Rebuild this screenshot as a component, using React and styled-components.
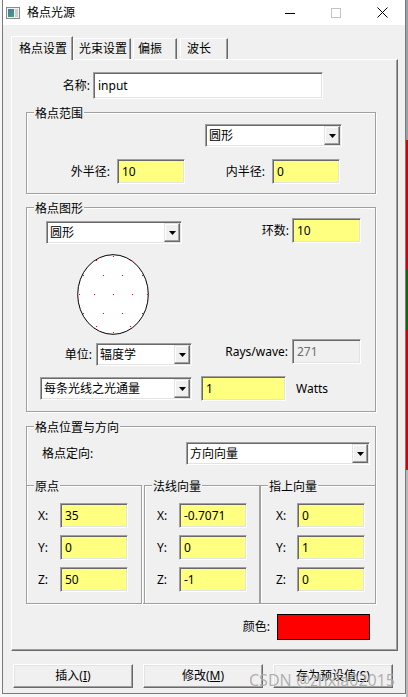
import React from "react";
import styled, { createGlobalStyle } from "styled-components";

const GlobalStyle = createGlobalStyle`
  html, body { margin: 0; padding: 0; }
  body {
    font-family: "Noto Sans", "Noto Sans CJK SC", sans-serif;
    font-size: 12px;
    color: #000;
  }
  * { box-sizing: border-box; }
`;

const Page = styled.div`
  position: relative;
  width: 408px;
  height: 697px;
  overflow: hidden;
  background:
    linear-gradient(
        to bottom,
        #9aa0a8 0 140px,
        #d80000 140px 270px,
        #0b6b0b 270px 330px,
        #d80000 330px 470px,
        #b8b8b8 470px
      )
      right top / 2px 100% no-repeat,
    #f7f7f7;
`;

const Window = styled.div`
  margin-left: 2px;
  width: 404px;
  height: 694px;
  border: 1px solid #7a7a7a;
  border-top: none;
  background: #f0f0f0;
  display: flex;
  flex-direction: column;
`;

const TitleBar = styled.div`
  height: 25px;
  background: #fff;
  display: flex;
  align-items: flex-start;
  flex-shrink: 0;
`;

const AppIcon = styled.svg`
  margin: 7px 0 0 3px;
  flex-shrink: 0;
`;

const TitleText = styled.span`
  margin: 5px 0 0 7px;
  line-height: 16px;
`;

const CaptionButton = styled.div`
  width: 46px;
  height: 25px;
  display: flex;
  align-items: center;
  justify-content: center;
  margin-left: ${(p) => (p.$first ? "auto" : "0")};
`;

const Body = styled.div`
  padding: 11px 7px 0 8px;
  display: flex;
  flex-direction: column;
`;

const TabStrip = styled.div`
  height: 23px;
  display: flex;
  align-items: flex-end;
`;

const Tab = styled.div`
  position: relative;
  z-index: ${(p) => (p.$active ? 2 : 0)};
  width: ${(p) => p.$w}px;
  height: ${(p) => (p.$active ? 24 : 21)}px;
  margin-bottom: ${(p) => (p.$active ? -1 : 0)}px;
  margin-left: ${(p) => p.$ml || 0}px;
  padding-left: ${(p) => p.$pl}px;
  background: #f0f0f0;
  border-top: 1px solid #fff;
  border-left: 1px solid #fff;
  border-right: 1px solid #696969;
  box-shadow: inset -1px 0 0 #a0a0a0;
  display: flex;
  align-items: center;
  line-height: 16px;
  white-space: nowrap;
`;

const Panel = styled.div`
  position: relative;
  z-index: 1;
  width: 387px;
  height: 592px;
  background: #f0f0f0;
  border-top: 1px solid #fff;
  border-left: 1px solid #fff;
  border-right: 1px solid #696969;
  border-bottom: 1px solid #696969;
  box-shadow: inset -1px -1px 0 #a0a0a0;
  display: flex;
  flex-direction: column;
`;

const Row = styled.div`
  display: flex;
  align-items: ${(p) => p.$align || "center"};
  justify-content: ${(p) => p.$justify || "flex-start"};
  margin-top: ${(p) => p.$mt || 0}px;
  padding-left: ${(p) => p.$pl || 0}px;
  padding-right: ${(p) => p.$pr || 0}px;
`;

const Field = styled.div`
  display: flex;
  align-items: center;
  margin-top: ${(p) => p.$mt || 0}px;
  margin-left: ${(p) => p.$ml || 0}px;
`;

const Label = styled.span`
  flex-shrink: 0;
  width: ${(p) => (p.$w ? `${p.$w}px` : "auto")};
  text-align: ${(p) => p.$align || "right"};
  margin-right: ${(p) => p.$gap || 0}px;
  margin-left: ${(p) => p.$ml || 0}px;
  line-height: 16px;
  white-space: nowrap;
`;

const sunken = `
  border: 1px solid;
  border-color: #a0a0a0 #fff #fff #a0a0a0;
  box-shadow: inset 1px 1px 0 #696969, inset -1px -1px 0 #e3e3e3;
`;

const TextBox = styled.div`
  flex-shrink: 0;
  width: ${(p) => p.$w}px;
  height: ${(p) => p.$h || 25}px;
  margin-left: ${(p) => p.$ml || 0}px;
  background: ${(p) =>
    p.$tone === "yellow" ? "#ffff80" : p.$tone === "disabled" ? "#f0f0f0" : "#fff"};
  color: ${(p) => (p.$tone === "disabled" ? "#6d6d6d" : "#000")};
  ${sunken}
  padding: 0 3px 0 4px;
  display: flex;
  align-items: center;
  line-height: 16px;
  white-space: nowrap;
`;

const Combo = styled.div`
  flex-shrink: 0;
  width: ${(p) => p.$w}px;
  height: 23px;
  background: #fff;
  ${sunken}
  display: flex;
  align-items: stretch;
`;

const ComboText = styled.span`
  flex: 1;
  display: flex;
  align-items: center;
  padding-left: 3px;
  line-height: 16px;
  white-space: nowrap;
  overflow: hidden;
`;

const ComboButton = styled.span`
  width: 16px;
  margin: 1px 1px 1px 0;
  background: #f0f0f0;
  border: 1px solid;
  border-color: #e3e3e3 #696969 #696969 #e3e3e3;
  box-shadow: inset -1px -1px 0 #a0a0a0, inset 1px 1px 0 #fff;
  display: flex;
  align-items: center;
  justify-content: center;
`;

const Group = styled.div`
  position: relative;
  width: ${(p) => p.$w}px;
  margin-top: ${(p) => p.$mt || 0}px;
  margin-left: ${(p) => p.$ml || 0}px;
  padding: ${(p) => p.$pt || 0}px 0 ${(p) => p.$pb || 0}px ${(p) => p.$pl || 0}px;
  border: 1px solid #a0a0a0;
  box-shadow: inset 1px 1px 0 #fff, 1px 1px 0 #fff;
  display: flex;
  flex-direction: column;
  flex-shrink: 0;
`;

const GroupTitle = styled.span`
  position: absolute;
  top: -7px;
  left: 7px;
  padding: 0 1px;
  background: #f0f0f0;
  line-height: 16px;
  white-space: nowrap;
`;

const SubRow = styled.div`
  display: flex;
  margin: 20px -1px -1px -1px;
`;

const SubFields = styled.div`
  display: flex;
  flex-direction: column;
  gap: 7px;
`;

const Swatch = styled.div`
  width: 93px;
  height: 26px;
  background: #ff0000;
  border: 1px solid #000;
`;

const ButtonRow = styled.div`
  display: flex;
  gap: 10px;
  margin-top: 13px;
  padding-left: 2px;
`;

const PushButton = styled.div`
  width: 120px;
  height: 24px;
  background: #f0f0f0;
  border: 1px solid;
  border-color: #fff #696969 #696969 #fff;
  box-shadow: inset -1px -1px 0 #a0a0a0, inset 1px 1px 0 #e3e3e3;
  display: flex;
  align-items: center;
  justify-content: center;
  line-height: 16px;
  white-space: nowrap;
`;

const Watermark = styled.span`
  position: absolute;
  left: 249px;
  top: 672px;
  font-family: "Noto Sans", sans-serif;
  font-size: 16px;
  line-height: 16px;
  color: rgba(150, 150, 150, 0.75);
  text-shadow: 0 0 1px rgba(255, 255, 255, 0.6);
  white-space: nowrap;
  pointer-events: none;
`;

const Arrow = () => (
  <svg width="7" height="4" viewBox="0 0 7 4">
    <polygon points="0,0 7,0 3.5,4" fill="#000" />
  </svg>
);

const ComboBox = ({ w, children }) => (
  <Combo $w={w}>
    <ComboText>{children}</ComboText>
    <ComboButton>
      <Arrow />
    </ComboButton>
  </Combo>
);

const dots = [
  [36, 2], [19, 6], [53, 6],
  [6, 21], [26, 21], [45, 21], [65, 21],
  [2, 40], [17, 40], [36, 40], [55, 40], [70, 40],
  [6, 59], [26, 59], [45, 59], [65, 59],
  [19, 72], [53, 72], [36, 78],
];

const subGroups = [
  { title: "原点", ml: 0, pl: 11, lw: 22, values: ["35", "0", "50"] },
  { title: "法线向量", ml: 2, pl: 12, lw: 22, values: ["-0.7071", "0", "-1"] },
  { title: "指上向量", ml: 0, pl: 15, lw: 21, values: ["0", "1", "0"] },
];

const axes = ["X:", "Y:", "Z:"];

export default function App() {
  return (
    <Page>
      <GlobalStyle />
      <Window>
        <TitleBar>
          <AppIcon width="14" height="12" viewBox="0 0 14 12">
            <defs>
              <linearGradient id="ig" x1="0" y1="0" x2="1" y2="1">
                <stop offset="0" stopColor="#3b78c0" />
                <stop offset="1" stopColor="#4ea35a" />
              </linearGradient>
            </defs>
            <rect x="0.5" y="0.5" width="13" height="11" fill="#f2f2f2" stroke="#8a8a8a" />
            <rect x="2" y="2" width="6" height="8" fill="url(#ig)" />
            <rect x="9" y="2" width="3" height="8" fill="#cfcfcf" />
          </AppIcon>
          <TitleText>格点光源</TitleText>
          <CaptionButton $first>
            <svg width="10" height="10" viewBox="0 0 10 10">
              <rect x="0" y="5" width="10" height="1" fill="#000" />
            </svg>
          </CaptionButton>
          <CaptionButton>
            <svg width="10" height="10" viewBox="0 0 10 10">
              <rect x="0.5" y="0.5" width="9" height="9" fill="none" stroke="#c4c4c4" />
            </svg>
          </CaptionButton>
          <CaptionButton>
            <svg width="11" height="11" viewBox="0 0 11 11">
              <path d="M0.5 0.5 L10.5 10.5 M10.5 0.5 L0.5 10.5" stroke="#000" strokeWidth="1" />
            </svg>
          </CaptionButton>
        </TitleBar>

        <Body>
          <TabStrip>
            <Tab $active $w={62} $pl={7}>格点设置</Tab>
            <Tab $w={58} $pl={5}>光束设置</Tab>
            <Tab $w={44} $pl={4} $ml={2}>偏振</Tab>
            <Tab $w={48} $pl={6} $ml={3}>波长</Tab>
          </TabStrip>

          <Panel>
            <Row $mt={12}>
              <Label $w={78} $gap={3}>名称:</Label>
              <TextBox $w={230} $h={27}>input</TextBox>
            </Row>

            <Group $w={350} $ml={14} $mt={13} $pt={11} $pb={9}>
              <GroupTitle>格点范围</GroupTitle>
              <Row $pl={178}>
                <ComboBox w={137}>圆形</ComboBox>
              </Row>
              <Row $mt={12}>
                <Label $w={83} $gap={7}>外半径:</Label>
                <TextBox $w={68} $tone="yellow">10</TextBox>
                <Label $w={80} $gap={7}>内半径:</Label>
                <TextBox $w={68} $tone="yellow">0</TextBox>
              </Row>
            </Group>

            <Group $w={350} $ml={14} $mt={13} $pt={10} $pb={10}>
              <GroupTitle>格点图形</GroupTitle>
              <Row $align="flex-start">
                <Field $mt={3} $ml={19}>
                  <ComboBox w={136}>圆形</ComboBox>
                </Field>
                <Field>
                  <Label $w={107} $gap={3}>环数:</Label>
                  <TextBox $w={69} $tone="yellow">10</TextBox>
                </Field>
              </Row>
              <Row $mt={10} $pl={50}>
                <svg width="72" height="81" viewBox="0 0 72 81">
                  <ellipse cx="36" cy="40.5" rx="35.3" ry="39.8" fill="#fff" stroke="#000" strokeWidth="1" />
                  {dots.map(([x, y], i) => (
                    <rect key={i} x={x} y={y} width="1" height="1" fill="#f00" />
                  ))}
                </svg>
              </Row>
              <Row $align="flex-start" $mt={4}>
                <Field $mt={4}>
                  <Label $w={65} $gap={4}>单位:</Label>
                  <ComboBox w={96}>辐度学</ComboBox>
                </Field>
                <Field>
                  <Label $w={96} $gap={4}>Rays/wave:</Label>
                  <TextBox $w={69} $tone="disabled">271</TextBox>
                </Field>
              </Row>
              <Row $mt={10} $pl={13}>
                <ComboBox w={152}>每条光线之光通量</ComboBox>
                <TextBox $w={85} $ml={9} $tone="yellow">1</TextBox>
                <Label $ml={10} $align="left">Watts</Label>
              </Row>
            </Group>

            <Group $w={350} $ml={14} $mt={14} $pt={15} $pb={0}>
              <GroupTitle>格点位置与方向</GroupTitle>
              <Row $pl={15}>
                <Label $w={144} $align="left">格点定向:</Label>
                <ComboBox w={184}>方向向量</ComboBox>
              </Row>
              <SubRow>
                {subGroups.map((g) => (
                  <Group key={g.title} $w={116} $ml={g.ml} $pt={17} $pb={11} $pl={g.pl}>
                    <GroupTitle>{g.title}</GroupTitle>
                    <SubFields>
                      {g.values.map((v, i) => (
                        <Field key={axes[i]}>
                          <Label $w={g.lw} $align="left">{axes[i]}</Label>
                          <TextBox $w={68} $tone="yellow">{v}</TextBox>
                        </Field>
                      ))}
                    </SubFields>
                  </Group>
                ))}
              </SubRow>
            </Group>

            <Row $mt={10} $justify="flex-end" $pr={27}>
              <Label $gap={7}>颜色:</Label>
              <Swatch />
            </Row>
          </Panel>

          <ButtonRow>
            <PushButton>插入(<u>I</u>)</PushButton>
            <PushButton>修改(<u>M</u>)</PushButton>
            <PushButton>存为预设值(<u>S</u>)</PushButton>
          </ButtonRow>
        </Body>
      </Window>
      <Watermark>CSDN @zhxia02015</Watermark>
    </Page>
  );
}
